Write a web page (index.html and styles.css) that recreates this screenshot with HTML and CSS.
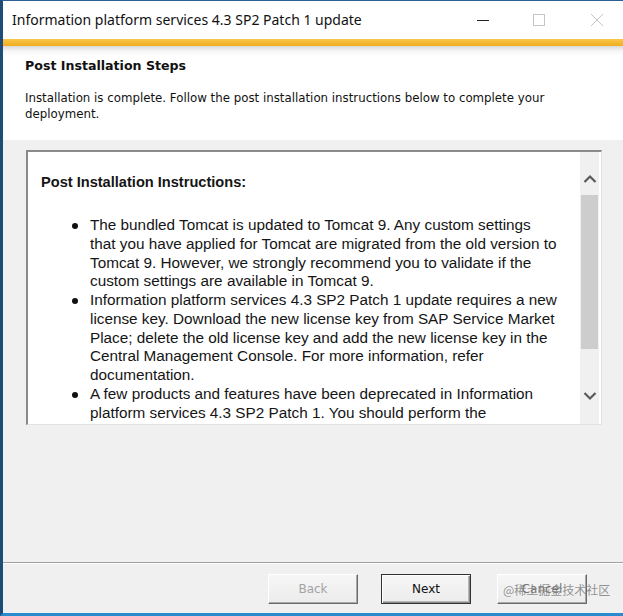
FILE: index.html
```html
<!DOCTYPE html>
<html>
<head>
<meta charset="utf-8">
<link rel="stylesheet" href="styles.css">
</head>
<body>
<div class="window">
  <div class="titlebar">
    <div class="title">Information platform services 4.3 SP2 Patch 1 update</div>
    <div class="controls">
      <span class="ctl min"><svg width="14" height="14" viewBox="0 0 14 14"><line x1="1" y1="7.5" x2="13" y2="7.5" stroke="#222" stroke-width="1"/></svg></span>
      <span class="ctl max"><svg width="14" height="14" viewBox="0 0 14 14"><rect x="1.5" y="1.5" width="11" height="11" fill="none" stroke="#c4c4c4" stroke-width="1"/></svg></span>
      <span class="ctl close"><svg width="14" height="14" viewBox="0 0 14 14"><path d="M1 1 L13 13 M13 1 L1 13" stroke="#c4c4c4" stroke-width="1"/></svg></span>
    </div>
  </div>
  <div class="accent"></div>
  <div class="header">
    <div class="h-title">Post Installation Steps</div>
    <div class="h-desc">Installation is complete. Follow the post installation instructions below to complete your<br>deployment.</div>
  </div>
  <div class="body">
    <div class="textbox">
      <div class="content">
        <div class="c-title">Post Installation Instructions:</div>
        <ul class="list">
          <li>The bundled Tomcat is updated to Tomcat 9. Any custom settings<br>that you have applied for Tomcat are migrated from the old version to<br>Tomcat 9. However, we strongly recommend you to validate if the<br>custom settings are available in Tomcat 9.</li>
          <li>Information platform services 4.3 SP2 Patch 1 update requires a new<br>license key. Download the new license key from SAP Service Market<br>Place; delete the old license key and add the new license key in the<br>Central Management Console. For more information, refer<br>documentation.</li>
          <li>A few products and features have been deprecated in Information<br>platform services 4.3 SP2 Patch 1. You should perform the</li>
        </ul>
      </div>
      <div class="scrollbar">
        <div class="arrow up"><svg width="14" height="10" viewBox="0 0 14 10"><path d="M1.5 8 L7 2.5 L12.5 8" fill="none" stroke="#5a5a5a" stroke-width="2.2"/></svg></div>
        <div class="track"><div class="thumb"></div></div>
        <div class="arrow down"><svg width="14" height="10" viewBox="0 0 14 10"><path d="M1.5 2 L7 7.5 L12.5 2" fill="none" stroke="#5a5a5a" stroke-width="2.2"/></svg></div>
      </div>
    </div>
  </div>
  <div class="footer">
    <button class="btn disabled">Back</button>
    <button class="btn default">Next</button>
    <button class="btn cancel">Cancel<span class="watermark">@稀土掘金技术社区</span></button>
  </div>
</div>
</body>
</html>
```
FILE: styles.css
```css
html, body {
  margin: 0;
  padding: 0;
  width: 623px;
  height: 616px;
  overflow: hidden;
  background: #f0f0f0;
}
.window {
  width: 620px;
  height: 612px;
  border-left: 3px solid #1d4c78;
  border-top: 1px solid #2b5f91;
  border-bottom: 3px solid #2a8ccf;
  display: flex;
  flex-direction: column;
  background: #f0f0f0;
  font-family: "Liberation Sans", Arial, sans-serif;
}
.titlebar {
  height: 38px;
  background: #fff;
  display: flex;
  align-items: center;
  justify-content: space-between;
  flex: none;
}
.title {
  font-family: "Noto Sans", "Open Sans", sans-serif;
  font-size: 14px;
  color: #111;
  padding-left: 9px;
  padding-bottom: 1px;
}
.controls {
  display: flex;
}
.ctl {
  width: 56px;
  height: 20px;
  display: flex;
  align-items: center;
  justify-content: center;
}
.ctl.close svg {
  margin-left: 4px;
}
.accent {
  height: 7px;
  flex: none;
  background: linear-gradient(#f8c64a, #f1ad1e);
}
.header {
  height: 94px;
  flex: none;
  background: linear-gradient(#d9d9d9 0px, #f6f6f6 5px, #fff 10px, #fff 100%);
  padding: 12px 20px 0 22px;
  box-sizing: border-box;
  font-family: "DejaVu Sans", Tahoma, sans-serif;
  color: #111;
}
.h-title {
  font-weight: bold;
  font-size: 12.6px;
}
.h-desc {
  margin-top: 17px;
  font-size: 11.8px;
  line-height: 16px;
}
.body {
  height: 423px;
  flex: none;
  padding: 10px 21px 0 23px;
  box-sizing: border-box;
  border-bottom: 1px solid #a0a0a0;
}
.textbox {
  height: 275px;
  background: #fff;
  border-top: 2px solid #8a8a8a;
  border-left: 2px solid #8a8a8a;
  border-right: 1px solid #e3e3e3;
  border-bottom: 1px solid #e3e3e3;
  display: flex;
  box-sizing: border-box;
}
.content {
  flex: 1;
  overflow: hidden;
  padding: 22px 0 0 13px;
  color: #151515;
  white-space: nowrap;
}
.c-title {
  font-weight: bold;
  font-size: 14.6px;
}
.list {
  margin: 26px 0 0 0;
  padding-left: 49px;
  list-style: none;
  font-size: 15.3px;
  line-height: 18.75px;
}
.list li {
  position: relative;
}
.list li::before {
  content: "";
  position: absolute;
  left: -18px;
  top: 7px;
  width: 6px;
  height: 6px;
  border-radius: 50%;
  background: #111;
}
.scrollbar {
  width: 19px;
  background: #f0f0f0;
  display: flex;
  flex-direction: column;
  flex: none;
  margin-right: 2px;
}
.arrow {
  height: 42px;
  display: flex;
  justify-content: center;
  align-items: flex-start;
  box-sizing: border-box;
  flex: none;
}
.arrow.up {
  padding-top: 22px;
}
.arrow.down {
  padding-top: 9px;
}
.track {
  flex: 1;
  padding: 1px 1px 0 1px;
}
.thumb {
  height: 154px;
  background: #cdcdcd;
}
.footer {
  flex: 1;
  display: flex;
  align-items: flex-start;
  padding: 10px 0 0 265px;
  gap: 23px;
  border-top: 1px solid #fff;
}
.btn {
  width: 90px;
  height: 30px;
  background: linear-gradient(#f6f6f6, #ececec);
  border: 1px solid;
  border-color: #fff #6b6b6b #6b6b6b #fff;
  box-shadow: inset -1px -1px 0 #a8a8a8;
  font-family: "DejaVu Sans", Tahoma, sans-serif;
  font-size: 12px;
  color: #111;
  padding: 0;
  position: relative;
}
.btn.disabled {
  color: #a3a3a3;
}
.btn.default {
  border: 1px solid #333;
  box-shadow: inset 1px 1px 0 #fff, inset -1px -1px 0 #8a8a8a, inset -2px -2px 0 #b8b8b8;
}
.btn.cancel {
  margin-left: 3px;
  color: #777;
}
.watermark {
  position: absolute;
  left: 5px;
  top: 6px;
  white-space: nowrap;
  font-family: "Noto Sans CJK SC", sans-serif;
  font-size: 12px;
  color: rgba(120, 120, 120, 0.8);
}
```
